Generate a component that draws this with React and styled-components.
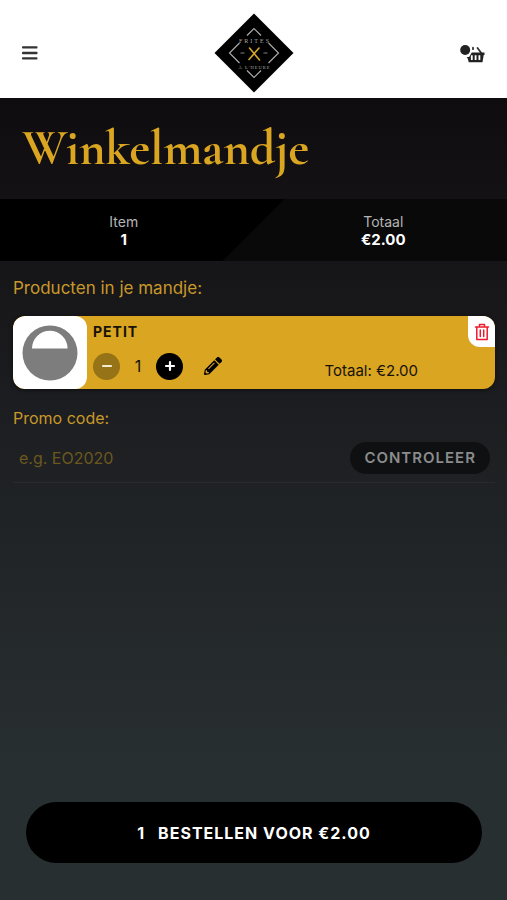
import React from "react";
import styled, { createGlobalStyle } from "styled-components";
import { FaPencilAlt } from "react-icons/fa";

const GlobalStyle = createGlobalStyle`
  * { box-sizing: border-box; }
  body {
    margin: 0;
    background: #282f30;
    font-family: Inter, "Liberation Sans", sans-serif;
  }
  button, input { font-family: inherit; }
  button { border: 0; padding: 0; cursor: pointer; }
`;

const gold = "#daa521";

const Page = styled.div`
  min-height: 100vh;
  display: flex;
  flex-direction: column;
  background: linear-gradient(#0f0c0f 98px, #1c1d20 400px, #282f30 760px);
`;

const Header = styled.header`
  display: grid;
  grid-template-columns: 1fr auto 1fr;
  align-items: center;
  height: 98px;
  padding: 8px 20px 0;
  background: #fff;
`;

const IconButton = styled.button`
  display: flex;
  justify-self: ${(p) => (p.$end ? "end" : "start")};
  background: none;
  color: #333;
`;

const LogoLink = styled.a`
  display: flex;
`;

const Title = styled.h1`
  margin: 0;
  padding: 24px 22px;
  font-family: "Cormorant Garamond", "Liberation Serif", serif;
  font-size: 50px;
  font-weight: 700;
  line-height: 53px;
  color: ${gold};
`;

const Summary = styled.dl`
  display: grid;
  grid-template-columns: 1fr 1fr;
  margin: 0;
  padding: 14px 0 12px;
  background: linear-gradient(135deg, #000 50%, #09090a 50%);
  text-align: center;
  font-size: 14px;
  line-height: 18px;
`;

const SummaryCell = styled.div`
  padding: ${(p) => (p.$end ? "0 0 0 6px" : "0 6px 0 0")};
`;

const SummaryLabel = styled.dt`
  color: #b5b5b5;
`;

const SummaryValue = styled.dd`
  margin: 0;
  font-size: 15px;
  font-weight: 700;
  color: #fff;
`;

const Content = styled.main`
  display: flex;
  flex-direction: column;
  padding: 16px 12px 0 13px;
`;

const SectionTitle = styled.h2`
  margin: 0;
  font-size: 17px;
  font-weight: 400;
  line-height: 22px;
  color: #c9982a;
`;

const Card = styled.article`
  position: relative;
  display: flex;
  height: 73px;
  margin: 17px 0 18px;
  overflow: hidden;
  border-radius: 12px;
  background: ${gold};
  color: #16120a;
  box-shadow: 0 1px 4px rgba(0, 0, 0, 0.5);
`;

const Thumb = styled.div`
  display: flex;
  align-items: center;
  justify-content: center;
  width: 74px;
  border-radius: 12px;
  background: #fff;
`;

const Details = styled.div`
  flex: 1;
  display: flex;
  flex-direction: column;
  padding: 7px 77px 0 6px;
`;

const ProductName = styled.h3`
  margin: 0;
  font-size: 14px;
  font-weight: 700;
  line-height: 18px;
  letter-spacing: 1px;
`;

const Controls = styled.div`
  display: flex;
  align-items: center;
  margin-top: 11px;
`;

const RoundButton = styled.button`
  display: flex;
  align-items: center;
  justify-content: center;
  width: 27px;
  height: 27px;
  border-radius: 50%;
  background: ${(p) => (p.$muted ? "#977317" : "#000")};
  color: ${(p) => (p.$muted ? "#f3ead2" : "#fff")};
`;

const Quantity = styled.output`
  width: 36px;
  text-align: center;
  font-size: 16px;
  line-height: 27px;
`;

const EditButton = styled.button`
  display: flex;
  margin-left: 21px;
  background: none;
  color: #000;
`;

const LineTotal = styled.span`
  margin-left: auto;
  padding-top: 10px;
  font-size: 15px;
  line-height: 18px;
`;

const RemoveButton = styled.button`
  position: absolute;
  top: 0;
  right: 0;
  display: flex;
  align-items: center;
  justify-content: center;
  width: 27px;
  height: 31px;
  border-radius: 0 0 0 12px;
  background: #fff;
  color: #ec1c2e;
`;

const PromoLabel = styled.label`
  font-size: 16px;
  line-height: 22px;
  color: #c9982a;
`;

const PromoRow = styled.form`
  display: flex;
  align-items: center;
  height: 54px;
  padding: 4px 5px 0 6px;
  border-bottom: 1px solid #272b2d;
`;

const PromoInput = styled.input`
  flex: 1;
  min-width: 0;
  padding: 0;
  border: 0;
  outline: 0;
  background: none;
  font-size: 16px;
  color: ${gold};
  &::placeholder { color: #6c581f; opacity: 1; }
`;

const CheckButton = styled.button`
  height: 32px;
  padding: 0 14px;
  border-radius: 16px;
  background: #0e1011;
  font-size: 15px;
  font-weight: 600;
  letter-spacing: 1px;
  color: #8b8c8d;
`;

const OrderButton = styled.button`
  display: flex;
  align-items: center;
  justify-content: center;
  gap: 13px;
  height: 61px;
  margin: auto 25px 37px 26px;
  border-radius: 31px;
  background: #000;
  font-size: 16px;
  font-weight: 700;
  letter-spacing: 1px;
  color: #fff;
`;

function MenuIcon() {
  return (
    <svg width="20" height="18" viewBox="0 0 20 18" fill="currentColor" aria-hidden="true">
      <rect x="2" y="2.2" width="15.5" height="2.4" rx="0.8" />
      <rect x="2" y="7.8" width="15.5" height="2.4" rx="0.8" />
      <rect x="2" y="13.2" width="15.5" height="2.4" rx="0.8" />
    </svg>
  );
}

function BasketIcon() {
  return (
    <svg width="27" height="22" viewBox="0 0 27 22" fill="none" aria-hidden="true">
      <circle cx="5.2" cy="8" r="5" fill="#222" />
      <path d="M13 5.7v1.5M17.5 6l3.6 4.8" stroke="#333" strokeWidth="1.8" strokeLinecap="round" />
      <path d="M11.8 10.5H24.5v2.4h-.8l-1.2 7.3H8.8L7.6 16.3l-1-1.200h2.500z" fill="#222" />
      <path d="M11.8 13.3v4.600M15.6 13.3v4.600M19.4 13.3v4.600" stroke="#fff" strokeWidth="1.8" />
    </svg>
  );
}

function Logo() {
  return (
    <svg width="80" height="80" viewBox="0 0 80 80" aria-label="Frites à l'heure" role="img">
      <path d="M40 .5 79.5 40 40 79.5.5 40z" fill="#000" />
      <g fill="none" stroke="#aaa" strokeWidth="1.2">
        <path d="M33 22.5 40 15.5l7 7M33 57.5l7 7 7-7" />
        <path d="M25.5 30 15.5 40l10 10M54.5 30l10 10-10 10" />
      </g>
      <path d="M35.5 35 45.5 47M45 35 35 46.5" stroke="#d6a72c" strokeWidth="1.6" strokeLinecap="round" />
      <g fill="#aaa" textAnchor="middle" fontFamily="Liberation Serif, serif">
        <text x="41" y="29.5" fontSize="6" letterSpacing="2">FRITES</text>
        <text x="40.5" y="56" fontSize="4.5" letterSpacing="1">À L'HEURE</text>
      </g>
      <path d="M26.5 40h4M49.5 40h4" stroke="#555" strokeWidth="1.5" />
    </svg>
  );
}

function BowlPicture() {
  return (
    <svg width="56" height="56" viewBox="0 0 56 56" aria-hidden="true">
      <circle cx="28" cy="28" r="27.5" fill="#7d7d7d" />
      <path d="M10 23.5a17.8 17.8 0 0 1 35.6 0z" fill="#fff" />
    </svg>
  );
}

function SignIcon({ plus }) {
  return (
    <svg width="12" height="12" viewBox="0 0 12 12" stroke="currentColor" strokeWidth="2.2" strokeLinecap="round" aria-hidden="true">
      <path d={plus ? "M2 6h8M6 2v8" : "M2 6h8"} />
    </svg>
  );
}

function TrashIcon() {
  return (
    <svg width="16" height="18" viewBox="0 0 16 18" fill="none" stroke="currentColor" strokeWidth="1.5" strokeLinecap="round" strokeLinejoin="round" aria-hidden="true">
      <path d="M1.5 4h13M5.5 3.700V1.500h5v2.200M2.800 4.500v12h10.400v-12M6.300 7v6.500M9.700 7v6.500" />
    </svg>
  );
}

export default function App() {
  return (
    <>
      <GlobalStyle />
      <Page>
        <Header>
          <IconButton aria-label="Menu"><MenuIcon /></IconButton>
          <LogoLink href="#" aria-label="Home"><Logo /></LogoLink>
          <IconButton $end aria-label="Winkelmandje"><BasketIcon /></IconButton>
        </Header>
        <Title>Winkelmandje</Title>
        <Summary>
          <SummaryCell>
            <SummaryLabel>Item</SummaryLabel>
            <SummaryValue>1</SummaryValue>
          </SummaryCell>
          <SummaryCell $end>
            <SummaryLabel>Totaal</SummaryLabel>
            <SummaryValue>€2.00</SummaryValue>
          </SummaryCell>
        </Summary>
        <Content>
          <SectionTitle>Producten in je mandje:</SectionTitle>
          <Card>
            <Thumb><BowlPicture /></Thumb>
            <Details>
              <ProductName>PETIT</ProductName>
              <Controls>
                <RoundButton $muted aria-label="Minder"><SignIcon /></RoundButton>
                <Quantity>1</Quantity>
                <RoundButton aria-label="Meer"><SignIcon plus /></RoundButton>
                <EditButton aria-label="Bewerken"><FaPencilAlt size={18} /></EditButton>
                <LineTotal>Totaal: €2.00</LineTotal>
              </Controls>
            </Details>
            <RemoveButton aria-label="Verwijderen"><TrashIcon /></RemoveButton>
          </Card>
          <PromoLabel htmlFor="promo">Promo code:</PromoLabel>
          <PromoRow onSubmit={(e) => e.preventDefault()}>
            <PromoInput id="promo" placeholder="e.g. EO2020" />
            <CheckButton type="submit">CONTROLEER</CheckButton>
          </PromoRow>
        </Content>
        <OrderButton>
          <span>1</span>
          <span>BESTELLEN VOOR €2.00</span>
        </OrderButton>
      </Page>
    </>
  );
}
